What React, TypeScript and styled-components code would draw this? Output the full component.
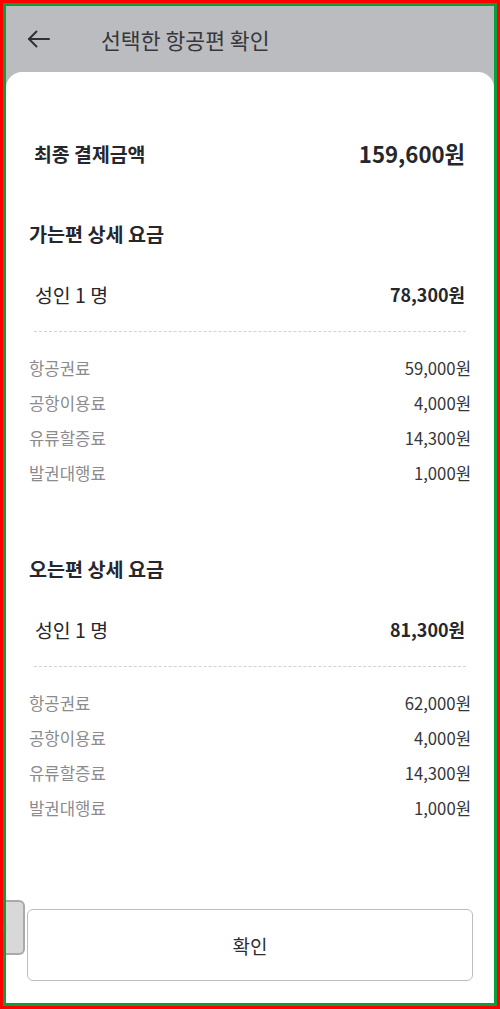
import React from "react";
import styled, { createGlobalStyle } from "styled-components";

const Global = createGlobalStyle`
  html, body { margin: 0; padding: 0; }
  body { font-family: "Noto Sans CJK KR", "Noto Sans", sans-serif; background: #fff; }
  * { box-sizing: border-box; }
`;

const Frame = styled.div`
  width: 500px;
  height: 1009px;
  border: 3px solid #ff0000;
`;

const Inner = styled.div`
  position: relative;
  height: 100%;
  border: 3px solid #0a9e3c;
  background: #bbbcc0;
  display: flex;
  flex-direction: column;
  overflow: hidden;
`;

const Header = styled.header`
  height: 66px;
  flex: none;
  display: flex;
  align-items: center;
  padding-left: 21px;
  gap: 51px;
`;

const BackButton = styled.button`
  border: 0;
  background: none;
  padding: 0;
  width: 23px;
  height: 18px;
  display: flex;
  color: #2f3137;
`;

const Title = styled.h1`
  margin: 0;
  font-size: 21.6px;
  font-weight: 400;
  color: #35373d;
`;

const Sheet = styled.main`
  flex: 1;
  background: #fff;
  border-radius: 16px 16px 0 0;
  padding: 0 22px 22px;
  display: flex;
  flex-direction: column;
`;

const TotalRow = styled.div`
  margin-top: 61px;
  height: 40px;
  display: flex;
  align-items: center;
  justify-content: space-between;
  padding: 0 7px 0 6px;
  color: #25272c;
`;

const TotalLabel = styled.span`
  font-size: 19.4px;
  font-weight: 700;
`;

const TotalValue = styled.span`
  font-size: 22.2px;
  font-weight: 700;
`;

const Section = styled.section<{ $gap: number }>`
  margin-top: ${(p) => p.$gap}px;
  display: flex;
  flex-direction: column;
`;

const SectionTitle = styled.h2`
  margin: 0;
  height: 24px;
  display: flex;
  align-items: center;
  padding-left: 1px;
  font-size: 19.6px;
  font-weight: 700;
  color: #25272c;
`;

const PaxRow = styled.div`
  margin-top: 29px;
  height: 40px;
  display: flex;
  align-items: center;
  justify-content: space-between;
  padding: 0 7px;
  color: #25272c;
`;

const PaxLabel = styled.span`
  font-size: 19.4px;
  font-weight: 400;
`;

const PaxValue = styled.span`
  font-size: 17.9px;
  font-weight: 700;
`;

const Divider = styled.hr`
  margin: 17px 6px 0;
  border: 0;
  border-top: 1px dashed #d2d2d2;
  height: 0;
`;

const FeeList = styled.ul`
  list-style: none;
  margin: 18px 0 0;
  padding: 0 1px;
`;

const FeeRow = styled.li`
  height: 35px;
  display: flex;
  align-items: center;
  justify-content: space-between;
  font-size: 16.7px;
`;

const FeeLabel = styled.span`
  color: #8b8b8e;
`;

const FeeValue = styled.span`
  color: #34363b;
`;

const ConfirmButton = styled.button`
  margin-top: auto;
  margin-left: -1px;
  margin-right: -1px;
  height: 72px;
  border: 1px solid #bdbdbf;
  border-radius: 6px;
  background: #fff;
  font-family: inherit;
  font-size: 19px;
  color: #2c2e33;
`;

const SideTab = styled.div`
  position: absolute;
  left: 0;
  top: 894px;
  width: 19px;
  height: 55px;
  background: #d8d8d9;
  border: 2px solid #a9a9ab;
  border-left: 0;
  border-radius: 0 6px 6px 0;
  display: flex;
  align-items: center;
`;

const TabArrow = styled.span`
  width: 0;
  height: 0;
  border-top: 3px solid transparent;
  border-bottom: 3px solid transparent;
  border-left: 4px solid #c6dcc9;
`;

type Fee = { label: string; value: string };

const outbound: Fee[] = [
  { label: "항공권료", value: "59,000원" },
  { label: "공항이용료", value: "4,000원" },
  { label: "유류할증료", value: "14,300원" },
  { label: "발권대행료", value: "1,000원" },
];

const inbound: Fee[] = [
  { label: "항공권료", value: "62,000원" },
  { label: "공항이용료", value: "4,000원" },
  { label: "유류할증료", value: "14,300원" },
  { label: "발권대행료", value: "1,000원" },
];

function FareSection({ title, pax, fees, gap }: { title: string; pax: string; fees: Fee[]; gap: number }) {
  return (
    <Section $gap={gap}>
      <SectionTitle>{title}</SectionTitle>
      <PaxRow>
        <PaxLabel>성인 1 명</PaxLabel>
        <PaxValue>{pax}</PaxValue>
      </PaxRow>
      <Divider />
      <FeeList>
        {fees.map((f) => (
          <FeeRow key={f.label}>
            <FeeLabel>{f.label}</FeeLabel>
            <FeeValue>{f.value}</FeeValue>
          </FeeRow>
        ))}
      </FeeList>
    </Section>
  );
}

export default function App() {
  return (
    <>
      <Global />
      <Frame>
        <Inner>
          <Header>
            <BackButton aria-label="뒤로">
              <svg width="23" height="18" viewBox="0 0 23 18" fill="none" stroke="currentColor" strokeWidth="2" strokeLinecap="round" strokeLinejoin="round">
                <path d="M22 9H2" />
                <path d="M9.5 1.5L2 9l7.5 7.5" />
              </svg>
            </BackButton>
            <Title>선택한 항공편 확인</Title>
          </Header>
          <Sheet>
            <TotalRow>
              <TotalLabel>최종 결제금액</TotalLabel>
              <TotalValue>159,600원</TotalValue>
            </TotalRow>
            <FareSection title="가는편 상세 요금" pax="78,300원" fees={outbound} gap={48} />
            <FareSection title="오는편 상세 요금" pax="81,300원" fees={inbound} gap={66} />
            <ConfirmButton>확인</ConfirmButton>
          </Sheet>
          <SideTab>
            <TabArrow />
          </SideTab>
        </Inner>
      </Frame>
    </>
  );
}
